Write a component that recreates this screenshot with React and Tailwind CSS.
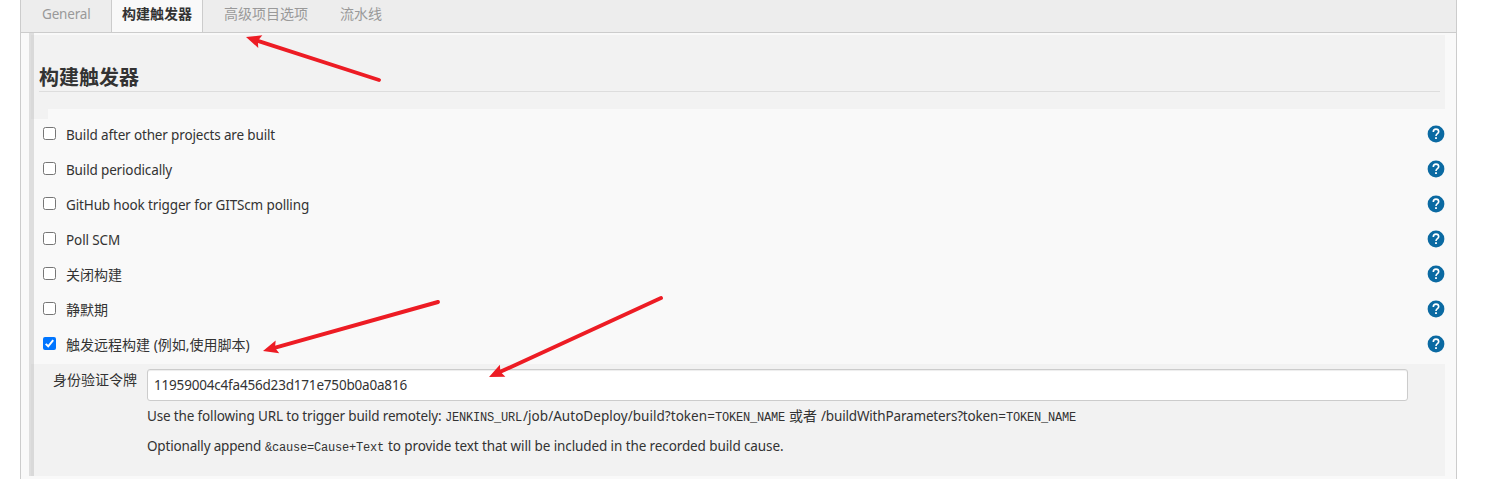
const triggers = [
  { label: "Build after other projects are built", style: "mt-[2px] text-[13.5px] tracking-[-0.15px]" },
  { label: "Build periodically", style: "mt-[2px] text-[13.5px] tracking-[-0.15px]" },
  { label: "GitHub hook trigger for GITScm polling", style: "mt-[2px] text-[13.5px] tracking-[-0.14px]" },
  { label: "Poll SCM", style: "mt-[2px] text-[13.5px] tracking-[-0.1px]" },
  { label: "关闭构建", style: "text-sm leading-5" },
  { label: "静默期", style: "text-sm leading-5" },
  { label: "触发远程构建 (例如,使用脚本)", style: "text-sm leading-5", checked: true },
];

const arrows = [
  { from: [379, 80], tip: [246, 37] },
  { from: [438, 302], tip: [263, 351] },
  { from: [661, 298], tip: [489, 377] },
];

function HelpIcon() {
  return (
    <svg className="size-[18px] shrink-0" viewBox="0 0 18 18" fill="none">
      <circle cx="9" cy="9" r="8.4" fill="#0b6aa2" />
      <path
        d="M6.3 6.9C6.3 5.2 7.4 4.1 9 4.1s2.7 1.1 2.7 2.6c0 1.9-2.7 2.1-2.7 4.2"
        stroke="#fff"
        strokeWidth="1.6"
      />
      <rect x="8.1" y="12.2" width="1.8" height="1.8" fill="#fff" />
    </svg>
  );
}

function Checkbox({ checked }) {
  if (checked) {
    return (
      <span className="mb-[2px] flex size-[13px] shrink-0 items-center justify-center rounded-[2px] bg-[#0075ff]">
        <svg className="size-[13px]" viewBox="0 0 13 13" fill="none">
          <path d="M2.7 6.9 5.2 9.3 10.2 3.2" stroke="#fff" strokeWidth="2" />
        </svg>
      </span>
    );
  }
  return <span className="mb-[2px] size-[13px] shrink-0 rounded-[2.5px] border border-[#767676] bg-white" />;
}

function Code({ children }) {
  return (
    <code className="font-['Liberation_Mono',monospace] text-[12px] tracking-[-0.2px]">{children}</code>
  );
}

function Arrow({ from, tip }) {
  const dx = from[0] - tip[0];
  const dy = from[1] - tip[1];
  const length = Math.hypot(dx, dy);
  const angle = (Math.atan2(dy, dx) * 180) / Math.PI;
  return (
    <g transform={`translate(${tip[0]} ${tip[1]}) rotate(${angle})`}>
      <line x1="10" y1="0" x2={length} y2="0" stroke="#ed1c24" strokeWidth="3.9" strokeLinecap="round" />
      <path d="M0 0 15 -6.6 12.5 0 15 6.6Z" fill="#ed1c24" />
    </g>
  );
}

export default function App() {
  return (
    <div className="relative h-[479px] w-[1501px] overflow-hidden bg-white font-['Noto_Sans','Noto_Sans_CJK_SC',sans-serif] text-[#333]">
      <div className="ml-5 flex h-full w-[1437px] flex-col border-x border-[#ccc] bg-[#f9f9f9]">
        <nav className="flex h-[33px] shrink-0 border-b border-[#ccc] bg-[#ededed] text-sm leading-[28px] text-[#999]">
          <div className="w-[90px] pl-[21px] text-[13.5px] leading-[29px] tracking-[-0.17px]">General</div>
          <div className="-mb-px w-[92px] border-x border-b border-[#ccc] bg-[#f9f9f9] pl-[10px] font-bold text-[#333]">
            构建触发器
          </div>
          <div className="w-[116px] pl-[21px]">高级项目选项</div>
          <div className="pl-[21px]">流水线</div>
        </nav>

        <main className="ml-2 flex h-[443px] w-[1416px] border-l-[5px] border-[#dedede]">
          <div className="flex w-full flex-col">
            <header className="mt-0.5 -ml-[3px] h-[74px] shrink-0 border-l-[3px] border-[#d9d9d9] bg-[#f2f2f2] pt-[25px] pr-[5px] pl-[5px]">
              <h2 className="h-[32px] border-b border-[#ddd] text-[20px] leading-[36px] font-bold">构建触发器</h2>
            </header>
            <div className="-ml-[3px] h-[10px] w-[17px] shrink-0 border-l-[3px] border-[#d9d9d9] bg-[#f2f2f2]" />

            <div className="-mt-[2px] flex shrink-0 flex-col">
              {triggers.map(({ label, style, checked }) => (
                <div key={label} className="flex h-[35px] items-center pl-[9px]">
                  <Checkbox checked={checked} />
                  <span className={`ml-[10px] grow whitespace-nowrap ${style}`}>{label}</span>
                  <span className="mb-[2px]">
                    <HelpIcon />
                  </span>
                </div>
              ))}
            </div>

            <section className="mt-[2px] -ml-[3px] flex h-[112px] shrink-0 border-l-[3px] border-[#d9d9d9] bg-[#f2f2f2]">
              <div className="w-[113px] pt-[5px] pl-[19px] text-sm leading-[22px]">身份验证令牌</div>
              <div className="pt-[5px] text-[13.5px] leading-[18px] whitespace-nowrap">
                <div className="flex h-[32px] w-[1261px] items-center rounded-[3px] border border-[#ccc] bg-white pl-[6px] tracking-[-0.19px] shadow-[inset_0_1px_1px_rgba(0,0,0,0.075)]">
                  11959004c4fa456d23d171e750b0a0a816
                </div>
                <p className="mt-[6px] flex h-[18px]">
                  <span className="w-[298px] tracking-[-0.155px]">Use the following URL to trigger build remotely:</span>
                  <span className="w-[78px]"><Code>JENKINS_URL</Code></span>
                  <span className="w-[192px] tracking-[0.04px]">/job/AutoDeploy/build?token=</span>
                  <span className="w-[74px]"><Code>TOKEN_NAME</Code></span>
                  <span className="w-[32px] text-sm leading-[18px]">或者</span>
                  <span className="w-[185px] tracking-[-0.17px]">/buildWithParameters?token=</span>
                  <span><Code>TOKEN_NAME</Code></span>
                </p>
                <p className="mt-[12px] flex h-[18px]">
                  <span className="w-[118px] tracking-[-0.18px]">Optionally append</span>
                  <span className="w-[123px]"><Code>&amp;cause=Cause+Text</Code></span>
                  <span className="tracking-[-0.105px]">
                    to provide text that will be included in the recorded build cause.
                  </span>
                </p>
              </div>
            </section>
          </div>
        </main>
      </div>

      <svg className="pointer-events-none absolute inset-0 h-[479px] w-[1501px]" viewBox="0 0 1501 479">
        {arrows.map((arrow) => (
          <Arrow key={arrow.tip.join()} {...arrow} />
        ))}
      </svg>
    </div>
  );
}
